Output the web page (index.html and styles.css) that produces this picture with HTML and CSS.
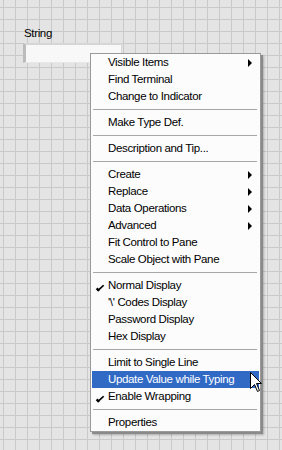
FILE: index.html
```html
<!DOCTYPE html>
<html>
	<head>
		<meta charset="UTF-8">
		<title>String</title>
		<link rel="stylesheet" href="styles.css">
	</head>
	<body>
		<div class="panel">
			<div class="ctl">
				<div class="ctl-label">String</div>
				<div class="ctl-box"></div>
			</div>

			<div class="menu">
				<div class="item sub">Visible Items</div>
				<div class="item">Find Terminal</div>
				<div class="item">Change to Indicator</div>
				<div class="sep"></div>
				<div class="item">Make Type Def.</div>
				<div class="sep"></div>
				<div class="item">Description and Tip...</div>
				<div class="sep"></div>
				<div class="item sub">Create</div>
				<div class="item sub">Replace</div>
				<div class="item sub">Data Operations</div>
				<div class="item sub">Advanced</div>
				<div class="item">Fit Control to Pane</div>
				<div class="item">Scale Object with Pane</div>
				<div class="sep"></div>
				<div class="item checked">Normal Display</div>
				<div class="item">'\' Codes Display</div>
				<div class="item">Password Display</div>
				<div class="item">Hex Display</div>
				<div class="sep"></div>
				<div class="item">Limit to Single Line</div>
				<div class="item active">Update Value while Typing</div>
				<div class="item checked">Enable Wrapping</div>
				<div class="sep"></div>
				<div class="item">Properties</div>
			</div>

			<svg class="cursor" width="13" height="21" viewBox="0 0 13 21">
				<path d="M0.5 0.5 L0.5 16.5 L4.5 12.5 L7.5 19.5 L9.5 18.5 L6.5 11.5 L11.5 11.5 Z" fill="#fff" stroke="#000" stroke-width="1"/>
			</svg>
		</div>
	</body>
</html>
```

FILE: styles.css
```css
* {
	margin: 0;
	padding: 0;
	box-sizing: border-box;
}

body {
	width: 282px;
	height: 450px;
	overflow: hidden;
	font-family: "Liberation Sans", Arial, sans-serif;
	font-size: 11.5px;
	letter-spacing: -0.35px;
	color: #000;
}

.panel {
	position: relative;
	width: 282px;
	height: 450px;
	padding: 26px 0 0 23px;
	background-color: #e4e4e4;
	background-image:
		linear-gradient(to right, #c9c9c9 1px, transparent 1px),
		linear-gradient(to bottom, #c9c9c9 1px, transparent 1px);
	background-size: 12px 12px;
	background-position: 3px 7px;
}

.ctl-label {
	height: 14px;
	line-height: 14px;
	padding-left: 1px;
}

.ctl-box {
	margin-top: 3px;
	width: 99px;
	height: 20px;
	background: #f8f8f8;
	border-top: 2px solid #d6d6d6;
	border-left: 3px solid #bcbcbc;
	border-right: 1px solid #d8d8d8;
	border-bottom: 1px solid #e8e8e8;
}

.menu {
	position: absolute;
	left: 90px;
	top: 53px;
	width: 171px;
	padding: 0 1px 0 1px;
	background: #fcfcfc;
	border: 1px solid #9a9a9a;
	box-shadow: 2px 2px 0 #8a8a8a, 3px 3px 2px rgba(0, 0, 0, 0.25);
}

.item {
	position: relative;
	height: 17px;
	line-height: 17px;
	padding-left: 16px;
	white-space: nowrap;
}

.item.active {
	background: #316ac5;
	color: #fff;
}

.item.sub::after {
	content: "";
	position: absolute;
	right: 7px;
	top: 5px;
	border-left: 4px solid #000;
	border-top: 4px solid transparent;
	border-bottom: 4px solid transparent;
}

.item.checked::before {
	content: "";
	position: absolute;
	left: 6px;
	top: 7px;
	width: 2px;
	height: 5px;
	border-right: 2px solid #000;
	border-bottom: 2px solid #000;
	transform: skewX(-20deg) rotate(35deg);
}

.sep {
	height: 1px;
	margin: 4px 2px 4px 1px;
	background: #a6a6a6;
}

.cursor {
	position: absolute;
	left: 250px;
	top: 372px;
}
```
